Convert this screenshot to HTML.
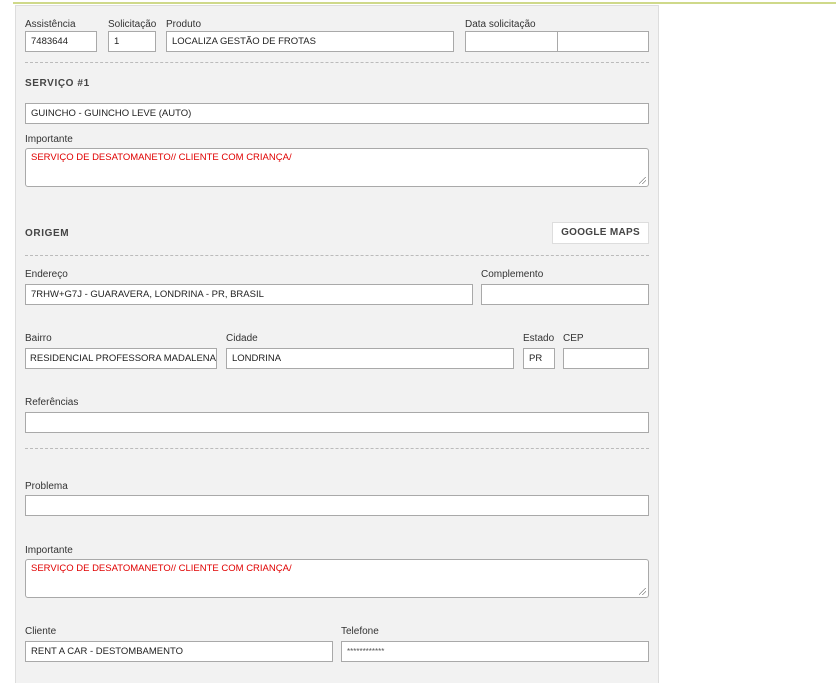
<!DOCTYPE html>
<html style="overflow:hidden"><head><meta charset="utf-8"><style>
*{margin:0;padding:0;box-sizing:border-box}
body{width:836px;height:683px;background:#fff;position:relative;overflow:hidden;font-family:"Liberation Sans",sans-serif;font-size:10px;color:#333}
.topline{position:absolute;left:13px;right:0;top:2px;height:2px;background:#cfd98a}
.panel{position:absolute;left:15px;top:5px;width:644px;height:678px;background:#f2f2f2;border:1px solid #ddd;border-bottom:none}
.l{position:absolute;font-size:10px;color:#333;white-space:nowrap;line-height:12px}
.i{position:absolute;height:21px;background:#fff;border:1px solid #a9a9a9;font-size:9.5px;line-height:19px;padding-left:5px;white-space:nowrap;overflow:hidden;color:#222}
.t{position:absolute;background:#fff;border:1px solid #a9a9a9;border-radius:3px;font-size:9.5px;color:#e00000;padding:3px 5px;line-height:12px}
.t:after{content:"";position:absolute;right:2px;bottom:2px;width:7px;height:7px;background:linear-gradient(135deg,transparent 45%,#888 45%,#888 52%,transparent 52%,transparent 70%,#888 70%,#888 77%,transparent 77%)}
.d{position:absolute;left:25px;width:624px;border-top:1px dashed #bbb;height:0}
.h{position:absolute;font-weight:bold;font-size:10px;color:#444;letter-spacing:.6px}
.btn{position:absolute;left:552px;top:222px;width:97px;height:22px;background:#fff;border:1px solid #ddd;font-weight:bold;font-size:10px;color:#444;text-align:center;line-height:20px;letter-spacing:.3px}
</style></head><body>
<div class="topline"></div>
<div class="panel"></div>

<div class="l" style="left:25px;top:19px">Assistência</div>
<div class="l" style="left:108px;top:19px">Solicitação</div>
<div class="l" style="left:166px;top:19px">Produto</div>
<div class="l" style="left:465px;top:19px">Data solicitação</div>
<div class="i" style="left:25px;top:31px;width:72px">7483644</div>
<div class="i" style="left:108px;top:31px;width:48px">1</div>
<div class="i" style="left:166px;top:31px;width:288px">LOCALIZA GESTÃO DE FROTAS</div>
<div class="i" style="left:465px;top:31px;width:93px"></div>
<div class="i" style="left:557px;top:31px;width:92px"></div>
<div class="d" style="top:62px"></div>

<div class="h" style="left:25px;top:78px">SERVIÇO #1</div>
<div class="i" style="left:25px;top:103px;width:624px">GUINCHO - GUINCHO LEVE (AUTO)</div>
<div class="l" style="left:25px;top:134px">Importante</div>
<div class="t" style="left:25px;top:148px;width:624px;height:39px">SERVIÇO DE DESATOMANETO// CLIENTE COM CRIANÇA/</div>

<div class="h" style="left:25px;top:228px">ORIGEM</div>
<div class="btn">GOOGLE MAPS</div>
<div class="d" style="top:255px"></div>

<div class="l" style="left:25px;top:269px">Endereço</div>
<div class="l" style="left:481px;top:269px">Complemento</div>
<div class="i" style="left:25px;top:284px;width:448px">7RHW+G7J - GUARAVERA, LONDRINA - PR, BRASIL</div>
<div class="i" style="left:481px;top:284px;width:168px"></div>

<div class="l" style="left:25px;top:333px">Bairro</div>
<div class="l" style="left:226px;top:333px">Cidade</div>
<div class="l" style="left:523px;top:333px">Estado</div>
<div class="l" style="left:563px;top:333px">CEP</div>
<div class="i" style="left:25px;top:348px;width:192px;padding-left:4px">RESIDENCIAL PROFESSORA MADALENA CA</div>
<div class="i" style="left:226px;top:348px;width:288px">LONDRINA</div>
<div class="i" style="left:523px;top:348px;width:32px">PR</div>
<div class="i" style="left:563px;top:348px;width:86px"></div>

<div class="l" style="left:25px;top:397px">Referências</div>
<div class="i" style="left:25px;top:412px;width:624px"></div>
<div class="d" style="top:448px"></div>

<div class="l" style="left:25px;top:481px">Problema</div>
<div class="i" style="left:25px;top:495px;width:624px"></div>

<div class="l" style="left:25px;top:545px">Importante</div>
<div class="t" style="left:25px;top:559px;width:624px;height:39px">SERVIÇO DE DESATOMANETO// CLIENTE COM CRIANÇA/</div>

<div class="l" style="left:25px;top:626px">Cliente</div>
<div class="l" style="left:341px;top:626px">Telefone</div>
<div class="i" style="left:25px;top:641px;width:308px">RENT A CAR - DESTOMBAMENTO</div>
<div class="i" style="left:341px;top:641px;width:308px;font-size:8px;color:#555">************</div>
</body></html>
